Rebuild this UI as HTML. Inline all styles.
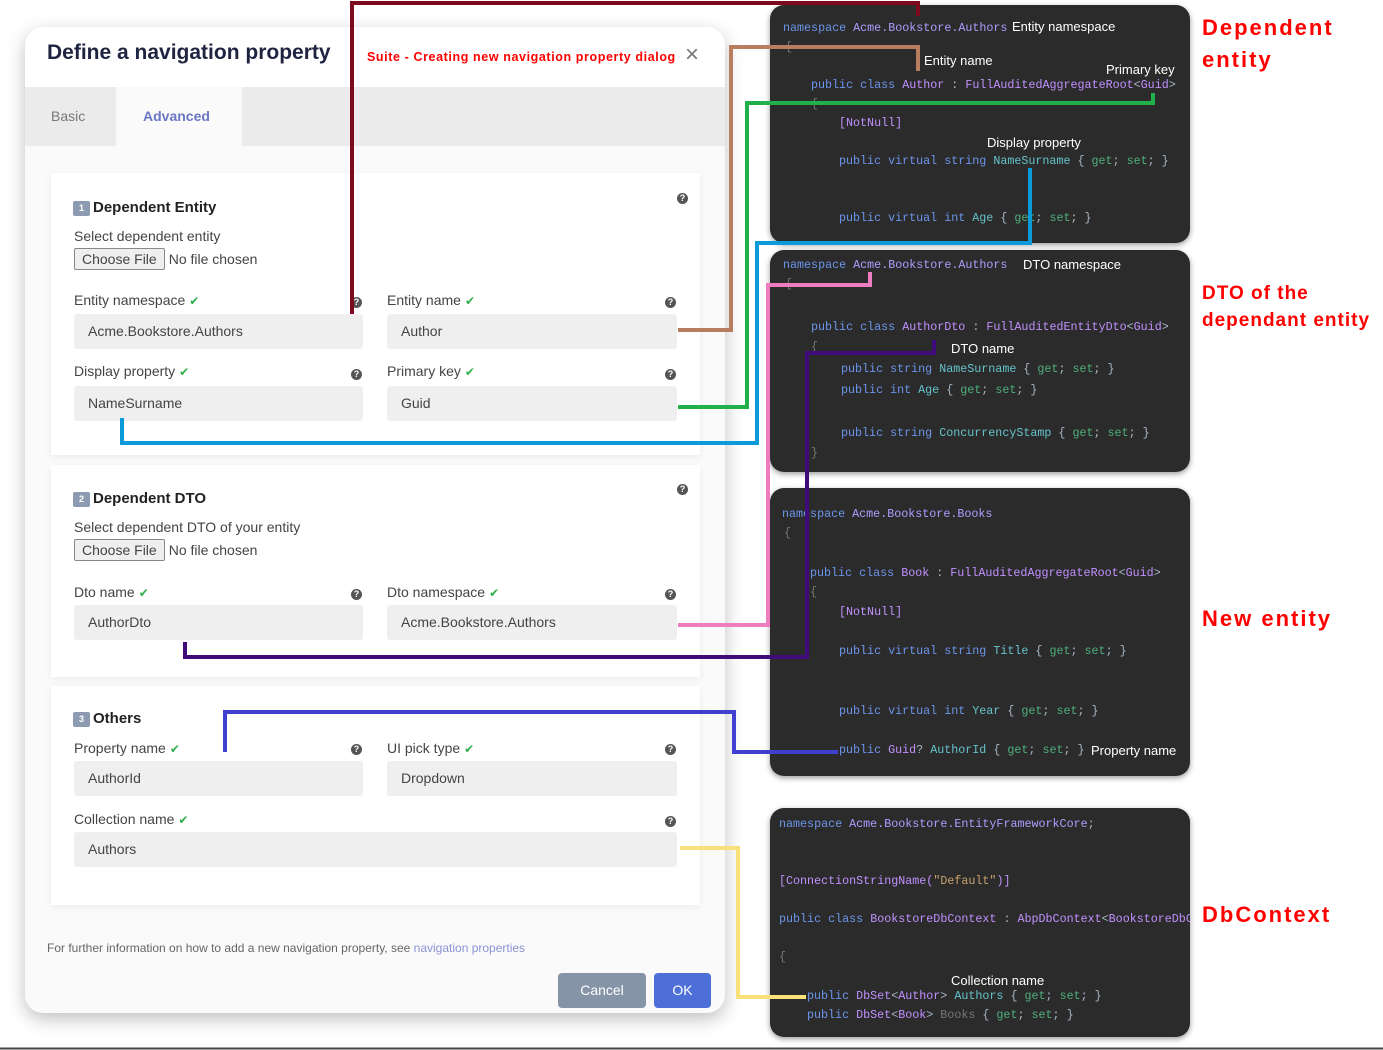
<!DOCTYPE html>
<html><head><meta charset="utf-8"><style>
*{margin:0;padding:0;box-sizing:border-box}
body{width:1383px;height:1050px;background:#fff;position:relative;overflow:hidden;font-family:"Liberation Sans",sans-serif}
.a{position:absolute;white-space:nowrap}
.dlg{position:absolute;left:25px;top:27px;width:700px;height:986px;background:#fafafb;border-radius:18px;box-shadow:0 6px 18px rgba(0,0,0,.25);overflow:hidden}
.card{position:absolute;left:26px;width:649px;background:#fff;box-shadow:0 2px 8px rgba(0,0,0,.06)}
.lbl{position:absolute;font-size:14px;color:#444;white-space:nowrap}
.ck{color:#2fae4a;font-size:12px;margin-left:4px}
.inp{position:absolute;height:35px;background:#efefef;border-radius:3px;font-size:14px;color:#444;padding:9px 14px;white-space:nowrap}
.q{position:absolute;width:11px;height:11px;border-radius:50%;background:#555;color:#fff;font-size:9px;font-weight:bold;text-align:center;line-height:11px}
.num{display:inline-block;width:17px;height:15px;background:#8c9bb1;color:#fff;font-size:9px;text-align:center;line-height:15px;border-radius:2px;margin-right:3px;vertical-align:1px}
.h{position:absolute;font-size:15px;font-weight:bold;color:#222;white-space:nowrap}
.file{position:absolute;font-size:14px;color:#444;white-space:nowrap}
.file span{display:inline-block;border:1px solid #888;background:#efefef;padding:2px 7px;border-radius:2px;margin-right:4px}
.code{position:absolute;left:770px;width:420px;background:#2b2b2b;border-radius:14px;box-shadow:0 2px 6px rgba(0,0,0,.4);overflow:hidden}
.c{position:absolute;font-family:"Liberation Mono",monospace;font-size:11.7px;white-space:pre;color:#a9b7c6}
.k{color:#6c95eb}.n{color:#b09cff}.t{color:#c191ff}.p{color:#66c3cc}.g{color:#4fb07c}.s{color:#c9a26d}.gr{color:#777}
.w{position:absolute;color:#fff;font-size:13px;white-space:nowrap}
.red{position:absolute;color:#f00;font-weight:bold;font-size:22px;letter-spacing:2px;line-height:32px}
</style></head><body>

<div class="dlg">
  <div class="a" style="left:0;top:0;width:700px;height:60px;background:#fff"></div>
  <div class="a" style="left:22px;top:14px;font-size:21px;color:#1f2440;font-weight:bold">Define a navigation property</div>
  <div class="a" style="left:342px;top:23px;font-size:12.5px;color:#f00;font-weight:bold;letter-spacing:0.6px">Suite - Creating new navigation property dialog</div>
  <div class="a" style="left:660px;top:14px;font-size:24px;color:#777">×</div>
  <div class="a" style="left:0;top:60px;width:700px;height:59px;background:#ebebeb"></div>
  <div class="a" style="left:91px;top:60px;width:126px;height:59px;background:#fafafb"></div>
  <div class="a" style="left:26px;top:81px;font-size:14px;color:#777">Basic</div>
  <div class="a" style="left:118px;top:81px;font-size:14px;color:#6b77c4;font-weight:bold">Advanced</div>

  <div class="card" style="top:146px;height:282px">
    <div class="h" style="left:22px;top:26px"><span class="num">1</span>Dependent Entity</div>
    <div class="q" style="left:626px;top:20px">?</div>
    <div class="lbl" style="left:23px;top:55px">Select dependent entity</div>
    <div class="file" style="left:23px;top:75px"><span>Choose File</span>No file chosen</div>
    <div class="lbl" style="left:23px;top:119px">Entity namespace<span class="ck">✔</span></div>
    <div class="q" style="left:300px;top:124px">?</div>
    <div class="inp" style="left:23px;top:141px;width:289px">Acme.Bookstore.Authors</div>
    <div class="lbl" style="left:336px;top:119px">Entity name<span class="ck">✔</span></div>
    <div class="q" style="left:614px;top:124px">?</div>
    <div class="inp" style="left:336px;top:141px;width:290px">Author</div>
    <div class="lbl" style="left:23px;top:190px">Display property<span class="ck">✔</span></div>
    <div class="q" style="left:300px;top:196px">?</div>
    <div class="inp" style="left:23px;top:213px;width:289px">NameSurname</div>
    <div class="lbl" style="left:336px;top:190px">Primary key<span class="ck">✔</span></div>
    <div class="q" style="left:614px;top:196px">?</div>
    <div class="inp" style="left:336px;top:213px;width:290px">Guid</div>
  </div>

  <div class="card" style="top:438px;height:212px">
    <div class="h" style="left:22px;top:25px"><span class="num">2</span>Dependent DTO</div>
    <div class="q" style="left:626px;top:19px">?</div>
    <div class="lbl" style="left:23px;top:54px">Select dependent DTO of your entity</div>
    <div class="file" style="left:23px;top:74px"><span>Choose File</span>No file chosen</div>
    <div class="lbl" style="left:23px;top:119px">Dto name<span class="ck">✔</span></div>
    <div class="q" style="left:300px;top:124px">?</div>
    <div class="inp" style="left:23px;top:140px;width:289px">AuthorDto</div>
    <div class="lbl" style="left:336px;top:119px">Dto namespace<span class="ck">✔</span></div>
    <div class="q" style="left:614px;top:124px">?</div>
    <div class="inp" style="left:336px;top:140px;width:290px">Acme.Bookstore.Authors</div>
  </div>

  <div class="card" style="top:659px;height:219px">
    <div class="h" style="left:22px;top:24px"><span class="num">3</span>Others</div>
    <div class="lbl" style="left:23px;top:54px">Property name<span class="ck">✔</span></div>
    <div class="q" style="left:300px;top:58px">?</div>
    <div class="inp" style="left:23px;top:75px;width:289px">AuthorId</div>
    <div class="lbl" style="left:336px;top:54px">UI pick type<span class="ck">✔</span></div>
    <div class="q" style="left:614px;top:58px">?</div>
    <div class="inp" style="left:336px;top:75px;width:290px">Dropdown</div>
    <div class="lbl" style="left:23px;top:125px">Collection name<span class="ck">✔</span></div>
    <div class="q" style="left:614px;top:130px">?</div>
    <div class="inp" style="left:23px;top:146px;width:603px">Authors</div>
  </div>

  <div class="a" style="left:22px;top:914px;font-size:12px;color:#666">For further information on how to add a new navigation property, see <span style="color:#8a93d4">navigation properties</span></div>
  <div class="a" style="left:533px;top:946px;width:88px;height:35px;background:#8694a8;border-radius:4px;color:#fff;font-size:14px;text-align:center;line-height:35px">Cancel</div>
  <div class="a" style="left:629px;top:946px;width:57px;height:35px;background:#4e6fd7;border-radius:4px;color:#fff;font-size:14px;text-align:center;line-height:35px">OK</div>
</div>

<div class="code" style="top:5px;height:238px">
  <div class="c" style="left:13px;top:16px"><span class="k">namespace</span> <span class="n">Acme.Bookstore.Authors</span></div>
  <div class="w" style="left:242px;top:14px">Entity namespace</div>
  <div class="c gr" style="left:15px;top:35px">{</div>
  <div class="w" style="left:154px;top:48px">Entity name</div>
  <div class="w" style="left:336px;top:57px">Primary key</div>
  <div class="c" style="left:41px;top:73px"><span class="k">public class</span> <span class="t">Author</span> : <span class="t">FullAuditedAggregateRoot</span>&lt;<span class="t">Guid</span>&gt;</div>
  <div class="c gr" style="left:41px;top:92px">{</div>
  <div class="c t" style="left:69px;top:111px">[NotNull]</div>
  <div class="w" style="left:217px;top:130px">Display property</div>
  <div class="c" style="left:69px;top:149px"><span class="k">public virtual string</span> <span class="p">NameSurname</span> { <span class="g">get</span>; <span class="g">set</span>; }</div>
  <div class="c" style="left:69px;top:206px"><span class="k">public virtual int</span> <span class="p">Age</span> { <span class="g">get</span>; <span class="g">set</span>; }</div>
</div>

<div class="code" style="top:250px;height:222px">
  <div class="c" style="left:13px;top:8px"><span class="k">namespace</span> <span class="n">Acme.Bookstore.Authors</span></div>
  <div class="w" style="left:253px;top:7px">DTO namespace</div>
  <div class="c gr" style="left:15px;top:27px">{</div>
  <div class="c" style="left:41px;top:70px"><span class="k">public class</span> <span class="t">AuthorDto</span> : <span class="t">FullAuditedEntityDto</span>&lt;<span class="t">Guid</span>&gt;</div>
  <div class="c gr" style="left:41px;top:90px">{</div>
  <div class="w" style="left:181px;top:91px">DTO name</div>
  <div class="c" style="left:71px;top:112px"><span class="k">public string</span> <span class="p">NameSurname</span> { <span class="g">get</span>; <span class="g">set</span>; }</div>
  <div class="c" style="left:71px;top:133px"><span class="k">public int</span> <span class="p">Age</span> { <span class="g">get</span>; <span class="g">set</span>; }</div>
  <div class="c" style="left:71px;top:176px"><span class="k">public string</span> <span class="p">ConcurrencyStamp</span> { <span class="g">get</span>; <span class="g">set</span>; }</div>
  <div class="c gr" style="left:41px;top:196px">}</div>
</div>

<div class="code" style="top:488px;height:288px">
  <div class="c" style="left:12px;top:19px"><span class="k">namespace</span> <span class="n">Acme.Bookstore.Books</span></div>
  <div class="c gr" style="left:14px;top:38px">{</div>
  <div class="c" style="left:40px;top:78px"><span class="k">public class</span> <span class="t">Book</span> : <span class="t">FullAuditedAggregateRoot</span>&lt;<span class="t">Guid</span>&gt;</div>
  <div class="c gr" style="left:40px;top:97px">{</div>
  <div class="c t" style="left:69px;top:117px">[NotNull]</div>
  <div class="c" style="left:69px;top:156px"><span class="k">public virtual string</span> <span class="p">Title</span> { <span class="g">get</span>; <span class="g">set</span>; }</div>
  <div class="c" style="left:69px;top:216px"><span class="k">public virtual int</span> <span class="p">Year</span> { <span class="g">get</span>; <span class="g">set</span>; }</div>
  <div class="c" style="left:69px;top:255px"><span class="k">public</span> <span class="t">Guid</span>? <span class="p">AuthorId</span> { <span class="g">get</span>; <span class="g">set</span>; }</div>
  <div class="w" style="left:321px;top:255px">Property name</div>
</div>

<div class="code" style="top:808px;height:229px">
  <div class="c" style="left:9px;top:9px"><span class="k">namespace</span> <span class="n">Acme.Bookstore.EntityFrameworkCore</span>;</div>
  <div class="c" style="left:9px;top:66px"><span class="t">[ConnectionStringName(</span><span class="s">"Default"</span><span class="t">)]</span></div>
  <div class="c" style="left:9px;top:104px"><span class="k">public class</span> <span class="t">BookstoreDbContext</span> : <span class="t">AbpDbContext</span>&lt;<span class="t">BookstoreDbContext</span>&gt;</div>
  <div class="c gr" style="left:9px;top:142px">{</div>
  <div class="w" style="left:181px;top:165px">Collection name</div>
  <div class="c" style="left:37px;top:181px"><span class="k">public</span> <span class="t">DbSet</span>&lt;<span class="t">Author</span>&gt; <span class="p">Authors</span> { <span class="g">get</span>; <span class="g">set</span>; }</div>
  <div class="c" style="left:37px;top:200px"><span class="k">public</span> <span class="t">DbSet</span>&lt;<span class="t">Book</span>&gt; <span class="gr">Books</span> { <span class="g">get</span>; <span class="g">set</span>; }</div>
</div>

<div class="red" style="left:1202px;top:12px">Dependent<br>entity</div>
<div class="red" style="left:1202px;top:280px;font-size:19px;line-height:27px;letter-spacing:1px">DTO of the<br>dependant entity</div>
<div class="red" style="left:1202px;top:603px">New entity</div>
<div class="red" style="left:1202px;top:899px">DbContext</div>

<svg class="a" style="left:0;top:0" width="1383" height="1050" fill="none" stroke-width="4" stroke-linejoin="miter">
  <path d="M352 314V3H918V16" stroke="#7b0a1e"/>
  <path d="M678 330H731V47H918V71" stroke="#b87d5e"/>
  <path d="M678 407H747V103H1153V93" stroke="#22b04b"/>
  <path d="M122 418V443H757V243H1030V168" stroke="#0c9ad8"/>
  <path d="M678 625H768V285H870V272" stroke="#f07cc0"/>
  <path d="M185 642V657H807V353H934V340" stroke="#3f0b7a"/>
  <path d="M225 752V712H734V752H838" stroke="#3f3fd0"/>
  <path d="M680 848H738V997H806" stroke="#f8e17a"/>
  <path d="M0 1048.5H1383" stroke="#444" stroke-width="2"/>
</svg>
</body></html>
